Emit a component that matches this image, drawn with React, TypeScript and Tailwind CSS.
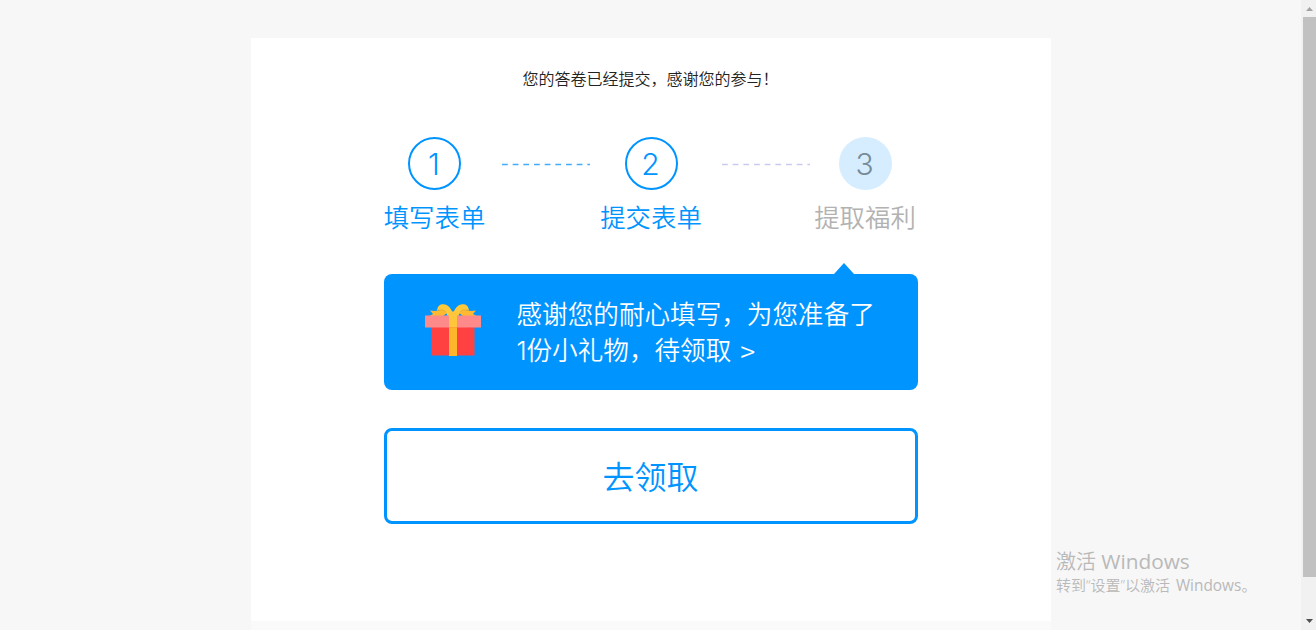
import { clsx } from 'clsx'

type Step = {
  no: number
  label: string
  done: boolean
}

const STEPS: Step[] = [
  { no: 1, label: '填写表单', done: true },
  { no: 2, label: '提交表单', done: true },
  { no: 3, label: '提取福利', done: false },
]

function StepItem({ step }: { step: Step }) {
  return (
    <div className="flex w-[102px] shrink-0 flex-col items-center">
      <span
        className={clsx(
          'flex size-[53px] items-center justify-center rounded-full pt-px pr-px font-["Inter","Noto_Sans_CJK_SC",sans-serif] text-[30px] leading-none font-[350]',
          step.done ? 'border-2 border-[#0094ff] text-[#0094ff]' : 'bg-[#d5edff] text-[#768a97]',
        )}
      >
        {step.no}
      </span>
      <span
        className={clsx(
          'mt-[7px] text-[25.4px] leading-[38px] whitespace-nowrap',
          step.done ? 'text-[#0094ff]' : 'text-[#b2b2b2]',
        )}
      >
        {step.label}
      </span>
    </div>
  )
}

function DashLine({ className }: { className: string }) {
  return (
    <svg className={clsx('mt-[26px] h-[3px] w-[88px] shrink-0', className)} viewBox="0 0 88 3" aria-hidden="true">
      <line x1="0" y1="1.5" x2="88" y2="1.5" stroke="currentColor" strokeWidth="1.5" strokeDasharray="5.8 4.87" />
    </svg>
  )
}

function GiftIcon() {
  return (
    <svg className="h-[52px] w-[56px] shrink-0" viewBox="0 0 56 52" aria-hidden="true">
      {/* bow tails */}
      <path d="M5 6.500 10 7 18 5.500 24 7.500 18 12H4.500L8 10z" fill="#fdb92f" />
      <path d="M51 6.500 46 7 38 5.500 32 7.500 38 12h13.500L48 10z" fill="#fdb92f" />
      {/* bow loops */}
      <path d="M12 6.500C12.500 2 15 .200 18.500.300 23 .600 25.500 4 28 9L25 12H22.500C21.500 8 19 4.800 12 6.500z" fill="#ffc93c" />
      <path d="M44 6.500C43.500 2 41 .200 37.500.300 33 .600 30.500 4 28 9l3 3h2.500C34.500 8 37 4.800 44 6.500z" fill="#ffc93c" />
      <path d="M12 6.500C16 5.200 19 5.800 21 8M44 6.500C40 5.200 37 5.800 35 8" fill="none" stroke="#d9a840" strokeWidth=".7" />
      {/* box */}
      <path d="M6.500 23h43v28.500h-43z" fill="#ff4142" />
      <path d="M0 11.500h56v12H0z" fill="#ff8a8a" />
      <path d="M24 7.500h8v16h-8z" fill="#ffc53b" />
      <path d="M24 23.500h8V52h-8z" fill="#fdb52b" />
    </svg>
  )
}

function Scrollbar() {
  return (
    <div className="flex w-[15px] shrink-0 flex-col items-end bg-[#f1f1f1]">
      <svg className="h-[17px] w-[15px]" viewBox="0 0 15 17" aria-hidden="true">
        <path d="M5 11h7L8.500 7z" fill="#a3a3a3" />
      </svg>
      <div className="h-[560px] w-[13px] bg-[#c1c1c1]" />
      <svg className="mt-auto h-[17px] w-[15px]" viewBox="0 0 15 17" aria-hidden="true">
        <path d="M5 6h7l-3.500 4z" fill="#505050" />
      </svg>
    </div>
  )
}

export default function App() {
  return (
    <div className='relative flex h-[630px] w-[1316px] overflow-hidden bg-[#f7f7f7] font-["Noto_Sans_CJK_SC",sans-serif] font-[350]'>
      <div className="flex flex-1 flex-col items-center pt-[38px]">
        <main className="flex h-[583px] w-[800px] shrink-0 flex-col bg-white px-[133px] pt-[28px]">
          <p className="text-center text-base leading-6 text-[#222]">您的答卷已经提交，感谢您的参与！</p>

          <div className="mt-[47px] flex items-start">
            <StepItem step={STEPS[0]} />
            <DashLine className="mr-[10.500px] ml-[16px] text-[#45adf8]" />
            <StepItem step={STEPS[1]} />
            <DashLine className="mr-[4.500px] ml-[19.500px] text-[#c9caf0]" />
            <StepItem step={STEPS[2]} />
          </div>

          <svg className="mt-[28px] ml-[449px] h-[11px] w-[22px]" viewBox="0 0 22 11" aria-hidden="true">
            <path d="M1 11 11 0l10 11z" fill="#0094ff" />
          </svg>
          <section className="flex h-[116px] w-[534px] items-start rounded-lg bg-[#0094ff] pt-[21px] pl-[41px]">
            <div className="mt-[9px]">
              <GiftIcon />
            </div>
            <p className="ml-[36px] text-[25.6px] leading-[36px] whitespace-nowrap text-white">
              感谢您的耐心填写，为您准备了
              <br />
              <span className='inline-block w-[10px] font-["Inter",sans-serif] font-light'>1</span>
              份小礼物，待领取<span className="ml-[3px] inline-block align-[-2px] text-[27px] leading-none whitespace-pre"> &gt;</span>
            </p>
          </section>

          <button className="mt-[38px] flex h-[96px] w-[534px] items-center justify-center rounded-lg border-3 border-[#0094ff] pb-[2px] text-[32px] leading-none text-[#0094ff]">
            去领取
          </button>
        </main>
        <div className="w-[800px] flex-1 bg-[#fafafa]" />
      </div>
      <Scrollbar />

      {/* system watermark, floats over the page */}
      <div className='absolute top-[548px] left-[1056px] font-["Open_Sans","Noto_Sans_CJK_SC",sans-serif] whitespace-nowrap text-[#b9b9b9]'>
        <p className="text-[20px] leading-[27px]">
          激活 <span className="text-[20.800px] font-normal">Windows</span>
        </p>
        <p className="text-[15px] leading-[20px]">
          转到“设置”以激活 <span className="ml-[2px] text-[15.400px] font-normal">Windows</span>。
        </p>
      </div>
    </div>
  )
}
